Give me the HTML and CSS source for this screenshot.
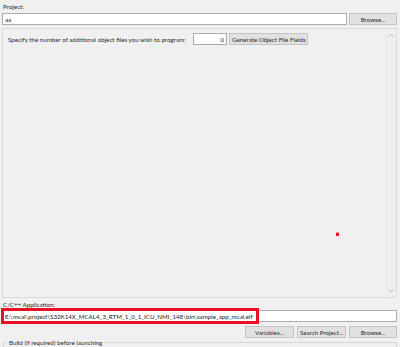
FILE: index.html
```html
<!DOCTYPE html>
<html lang="en">
<head>
  <meta charset="UTF-8" />
  <title>Debug Configuration - Main</title>
  <link rel="stylesheet" href="styles.css">
</head>
<body>
  <div class="tab-main">
    <div class="form-label">Project:</div>
    <div class="field-row">
      <input class="form-input" value="aa" />
      <button class="btn btn-browse">Browse...</button>
    </div>

    <div class="scroll-panel">
      <div class="scroll-content">
        <div class="object-row">
          <span class="object-text">Specify the number of additional object files you wish to program:</span>
          <input class="form-input count-input" value="0" />
          <button class="btn btn-generate">Generate Object File Fields</button>
        </div>
        <span class="marker"></span>
      </div>
      <div class="scrollbar">
        <svg class="arrow" width="7" height="5" viewBox="0 0 7 5"><path d="M0.5 4L3.5 1L6.5 4" fill="none" stroke="#b4b4b4" stroke-width="1"/></svg>
        <svg class="arrow" width="7" height="5" viewBox="0 0 7 5"><path d="M0.5 1L3.5 4L6.5 1" fill="none" stroke="#b4b4b4" stroke-width="1"/></svg>
      </div>
    </div>

    <div class="form-label app-label">C/C++ Application:</div>
    <div class="app-field">
      <input class="form-input app-input" value="E:\mcal\project\S32K14X_MCAL4_3_RTM_1_0_1_ICU_NMI_148\bin\sample_app_mcal.elf" />
      <span class="highlight"></span>
    </div>
    <div class="button-row">
      <button class="btn btn-variables">Variables...</button>
      <button class="btn btn-search">Search Project...</button>
      <button class="btn btn-browse">Browse...</button>
    </div>

    <fieldset class="group">
      <legend>Build (if required) before launching</legend>
    </fieldset>
  </div>
</body>
</html>
```

FILE: styles.css
```css
body {
  font-family: Lato, "Open Sans", sans-serif;
  font-size: 6.2px;
  background-color: #f0f0f0;
  color: #2a2a2a;
  margin: 0;
  overflow: hidden;
  white-space: nowrap;
}
.tab-main {
  padding: 2px 3px 0 2px;
}
.form-label {
  height: 11px;
  line-height: 10px;
  padding-left: 1px;
}
.field-row {
  display: flex;
  gap: 2px;
  height: 12px;
}
.form-input {
  box-sizing: border-box;
  border: 1px solid #acacac;
  background: #fff;
  font-family: inherit;
  font-size: 6.2px;
  color: #222;
  height: 12px;
  padding: 0 2px;
  margin: 0;
  outline: none;
}
.field-row .form-input {
  flex: 1;
}
.btn {
  box-sizing: border-box;
  border: 1px solid #c4c4c4;
  background: #e1e1e1;
  font-family: inherit;
  font-size: 6.2px;
  color: #2a2a2a;
  height: 12px;
  padding: 0 2px;
  margin: 0;
  white-space: nowrap;
}
.btn-browse {
  width: 48px;
}
.scroll-panel {
  margin-top: 3px;
  height: 270px;
  box-sizing: border-box;
  border: 1px solid #dadada;
  display: flex;
}
.scroll-content {
  flex: 1;
  position: relative;
}
.object-row {
  display: flex;
  align-items: center;
  padding: 4px 0 0 5px;
}
.object-text {
  width: 182px;
  margin-right: 3px;
}
.count-input {
  width: 34px;
  text-align: right;
  margin-right: 2px;
}
.btn-generate {
  width: 79px;
}
.marker {
  position: absolute;
  left: 333px;
  top: 203px;
  width: 3px;
  height: 3px;
  background: #e81123;
  border-top: 1px solid #f3a0a6;
}
.scrollbar {
  width: 9px;
  border-left: 1px solid #e6e6e6;
  display: flex;
  flex-direction: column;
  justify-content: space-between;
  align-items: center;
  padding: 4px 0 4px;
}
.arrow {
  display: block;
}
.app-label {
  margin-top: 2px;
  height: 10px;
}
.app-field {
  position: relative;
  height: 12px;
}
.app-input {
  width: 100%;
}
.highlight {
  position: absolute;
  left: -1px;
  top: -2px;
  width: 258px;
  height: 16px;
  box-sizing: border-box;
  border: 3px solid #e81123;
}
.button-row {
  display: flex;
  justify-content: flex-end;
  gap: 3px;
  margin-top: 4px;
}
.btn-variables {
  width: 49px;
}
.btn-search {
  width: 49px;
}
.group {
  margin: 0 0 0 1px;
  padding: 0;
  border: 1px solid #d6d6d6;
  border-bottom: none;
  height: 20px;
}
.group legend {
  padding: 0 2px;
  margin-left: 3px;
  line-height: 9px;
}
```
